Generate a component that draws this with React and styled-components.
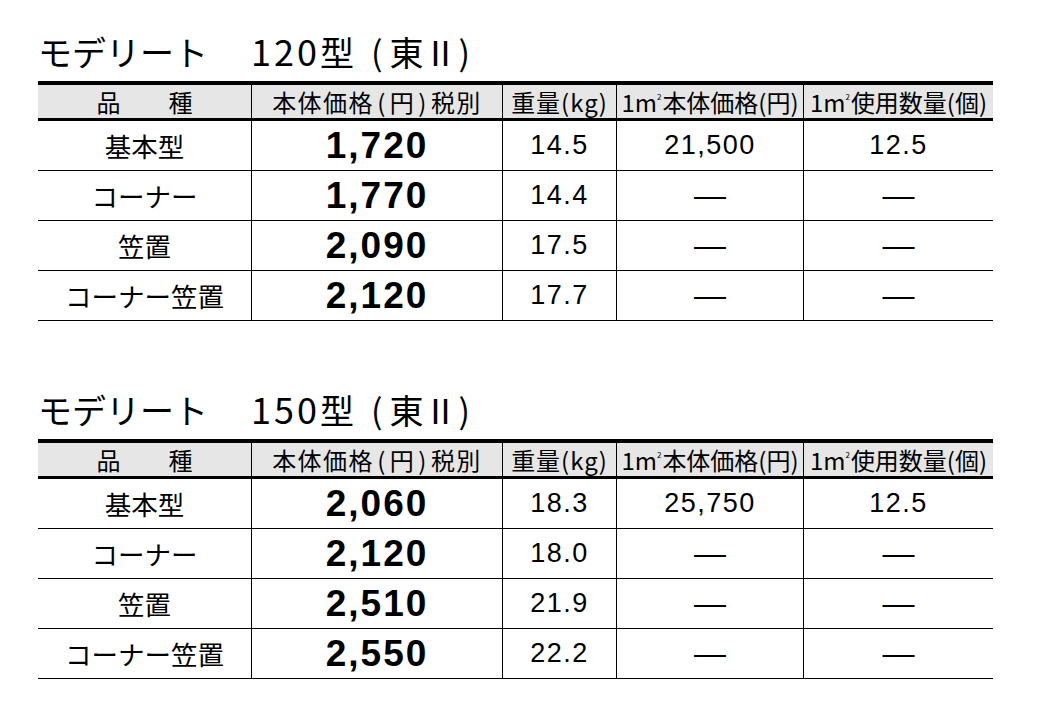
import React from 'react';
import styled, { createGlobalStyle } from 'styled-components';

const GlobalStyle = createGlobalStyle`
  html, body {
    margin: 0;
    padding: 0;
    background: #ffffff;
  }
  body {
    font-family: "Noto Sans CJK JP", "Liberation Sans", sans-serif;
    color: #000000;
  }
`;

const tables = [
  {
    model: '120',
    rows: [
      { name: '基本型', price: '1,720', weight: '14.5', perM2: '21,500', count: '12.5' },
      { name: 'コーナー', price: '1,770', weight: '14.4' },
      { name: '笠置', price: '2,090', weight: '17.5' },
      { name: 'コーナー笠置', price: '2,120', weight: '17.7' },
    ],
  },
  {
    model: '150',
    rows: [
      { name: '基本型', price: '2,060', weight: '18.3', perM2: '25,750', count: '12.5' },
      { name: 'コーナー', price: '2,120', weight: '18.0' },
      { name: '笠置', price: '2,510', weight: '21.9' },
      { name: 'コーナー笠置', price: '2,550', weight: '22.2' },
    ],
  },
];

export default function App() {
  return (
    <>
      <GlobalStyle />
      <Page>
        {tables.map((t) => (
          <Section key={t.model}>
            <Title>
              モデリート
              <Model>
                <Digits>{t.model}</Digits>型
              </Model>
              <Suffix>
                <Open>(</Open>東<Numeral>Ⅱ</Numeral>)
              </Suffix>
            </Title>
            <Table>
              <colgroup>
                <col style={{ width: 213 }} />
                <col style={{ width: 251 }} />
                <col style={{ width: 114 }} />
                <col style={{ width: 187 }} />
                <col style={{ width: 190 }} />
              </colgroup>
              <thead>
                <tr>
                  <Head>品　　種</Head>
                  <Head $spacing={1.5}>
                    本体価格<Paren>(</Paren>円<Paren>)</Paren>税別
                  </Head>
                  <Head $spacing={1}>重量(kg)</Head>
                  <Head>
                    1m<Sq>2</Sq>本体価格(円)
                  </Head>
                  <Head>
                    1m<Sq>2</Sq>使用数量(個)
                  </Head>
                </tr>
              </thead>
              <tbody>
                {t.rows.map((r) => (
                  <tr key={r.name}>
                    <Name>{r.name}</Name>
                    <Price>{r.price}</Price>
                    <Num>{r.weight}</Num>
                    <Num>{r.perM2 || <Dash>—</Dash>}</Num>
                    <Num>{r.count || <Dash>—</Dash>}</Num>
                  </tr>
                ))}
              </tbody>
            </Table>
          </Section>
        ))}
      </Page>
    </>
  );
}

const Page = styled.div`
  width: 1040px;
  height: 710px;
  padding: 30px 0 0 38px;
  box-sizing: border-box;
  display: flex;
  flex-direction: column;
  gap: 67px;
`;

const Section = styled.section`
  display: flex;
  flex-direction: column;
`;

const Title = styled.h2`
  margin: 0 0 11px 0;
  height: 40px;
  line-height: 40px;
  font-size: 34px;
  font-weight: 400;
  white-space: nowrap;
`;

const Model = styled.span`
  margin-left: 43px;
`;

const Digits = styled.span`
  font-size: 36px;
  letter-spacing: 3px;
`;

const Suffix = styled.span`
  margin-left: 17px;
`;

const Open = styled.span`
  margin-right: 7px;
`;

const Numeral = styled.span`
  margin: 0 1px 0 0;
`;

const Table = styled.table`
  width: 955px;
  table-layout: fixed;
  border-collapse: separate;
  border-spacing: 0;
  border-top: 4px solid #000;
`;

const Head = styled.th`
  height: 33px;
  padding: 0;
  background: #e6e6e6;
  border-bottom: 3px solid #000;
  font-size: 24px;
  font-weight: 400;
  line-height: 33px;
  text-align: center;
  white-space: nowrap;
  letter-spacing: ${(p) => p.$spacing || 0}px;
  & + & {
    border-left: 1px solid #000;
  }
`;

const Paren = styled.span`
  margin: 0 3px;
`;

const Sq = styled.span`
  display: inline-block;
  font-size: 8px;
  line-height: 8px;
  vertical-align: 12px;
  margin-right: 1px;
`;

const Cell = styled.td`
  height: 49px;
  padding: 0;
  border-bottom: 1px solid #000;
  text-align: center;
  white-space: nowrap;
  & + & {
    border-left: 1px solid #000;
  }
`;

const Name = styled(Cell)`
  font-size: 26.5px;
`;

const Price = styled(Cell)`
  font-family: "Liberation Sans", Arial, sans-serif;
  font-size: 37px;
  font-weight: 700;
  letter-spacing: 2px;
`;

const Num = styled(Cell)`
  font-family: "Liberation Sans", Arial, sans-serif;
  font-size: 27px;
  letter-spacing: 1.5px;
`;

const Dash = styled.span`
  font-size: 32px;
  letter-spacing: 0;
`;
